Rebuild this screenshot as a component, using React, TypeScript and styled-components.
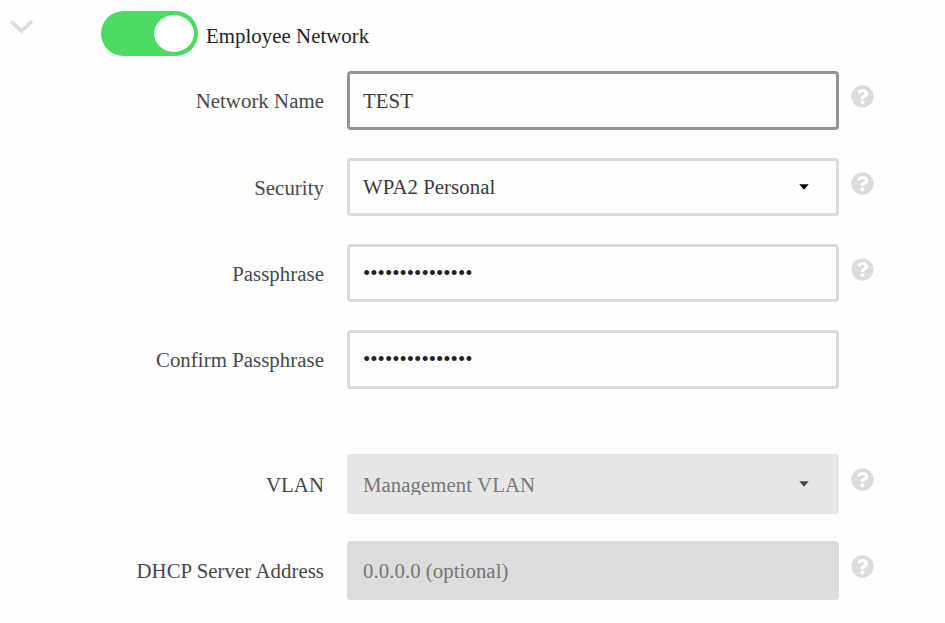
import React from "react";
import styled, { createGlobalStyle } from "styled-components";
import { FaQuestionCircle } from "react-icons/fa";

const GlobalStyle = createGlobalStyle`
  *, *::before, *::after { box-sizing: border-box; }
  body {
    margin: 0;
    background: #fefefe;
    font-family: "Liberation Serif", "Times New Roman", serif;
    font-size: 20.8px;
    letter-spacing: 0.06px;
  }
`;

const Page = styled.main`
  width: 945px;
  height: 623px;
  overflow: hidden;
`;

const Header = styled.header`
  display: flex;
  align-items: flex-start;
  height: 71px;
  padding: 11px 0 0 9px;
`;

const Chevron = styled.svg`
  width: 25px;
  height: 16px;
  margin: 8px 67px 0 0;
`;

const Toggle = styled.button`
  display: flex;
  justify-content: flex-end;
  width: 97px;
  height: 45px;
  padding: 4px;
  border: 0;
  border-radius: 23px;
  background: #4cd964;
`;

const Knob = styled.span`
  width: 40px;
  height: 37px;
  border-radius: 50%;
  background: #fff;
`;

const Title = styled.span`
  margin: 13px 0 0 8px;
  color: #222;
  line-height: 24px;
  white-space: nowrap;
`;

const Row = styled.div<{ $height: number; $gap: number }>`
  display: grid;
  grid-template-columns: 324px 492px 23px;
  column-gap: 23px;
  height: ${(p) => p.$height}px;
  margin-bottom: ${(p) => p.$gap}px;
`;

const Label = styled.label<{ $top: number }>`
  padding-top: ${(p) => p.$top}px;
  color: #484848;
  line-height: 24px;
  text-align: right;
  white-space: nowrap;
`;

type Tone = "focused" | "normal" | "disabledSelect" | "disabledInput";

const tones: Record<Tone, { border: string; fill: string; text: string }> = {
  focused: { border: "#939393", fill: "#fefefe", text: "#3c3c3c" },
  normal: { border: "#dadada", fill: "#fefefe", text: "#3a3a3a" },
  disabledSelect: { border: "#e6e6e6", fill: "#e6e6e6", text: "#777" },
  disabledInput: { border: "#dcdcdc", fill: "#dcdcdc", text: "#757575" },
};

const Field = styled.div<{ $tone: Tone; $top: number }>`
  display: flex;
  align-items: flex-start;
  justify-content: space-between;
  padding: ${(p) => p.$top}px 27px 0 13px;
  border: 3px solid ${(p) => tones[p.$tone].border};
  border-radius: 4px;
  background: ${(p) => tones[p.$tone].fill};
  color: ${(p) => tones[p.$tone].text};
`;

const Value = styled.span<{ $clip?: boolean }>`
  height: ${(p) => (p.$clip ? 22 : 24)}px;
  overflow: ${(p) => (p.$clip ? "hidden" : "visible")};
  line-height: 24px;
  white-space: nowrap;
`;

const Dots = styled(Value)`
  color: #222;
  letter-spacing: 0.02px;
`;

const Caret = styled.svg<{ $top: number }>`
  width: 10px;
  height: 6px;
  margin-top: ${(p) => p.$top}px;
`;

const Help = styled(FaQuestionCircle)<{ $top: number }>`
  width: 23px;
  height: 23px;
  margin: ${(p) => p.$top}px 0 0 -11px;
  color: #dcdcdc;
`;

interface FieldRow {
  label: string;
  value: string;
  tone: Tone;
  height: number;
  gap: number;
  labelTop: number;
  top: number;
  kind?: "select" | "password";
  helpTop?: number;
}

const rows: FieldRow[] = [
  { label: "Network Name", value: "TEST", tone: "focused", height: 59, gap: 28, labelTop: 18, top: 15, helpTop: 14 },
  { label: "Security", value: "WPA2 Personal", tone: "normal", height: 58, gap: 28, labelTop: 18, top: 14, kind: "select", helpTop: 14 },
  { label: "Passphrase", value: "•".repeat(15), tone: "normal", height: 58, gap: 28, labelTop: 18, top: 14, kind: "password", helpTop: 14 },
  { label: "Confirm Passphrase", value: "•".repeat(15), tone: "normal", height: 59, gap: 65, labelTop: 18, top: 14, kind: "password" },
  { label: "VLAN", value: "Management VLAN", tone: "disabledSelect", height: 60, gap: 27, labelTop: 19, top: 16, kind: "select", helpTop: 14 },
  { label: "DHCP Server Address", value: "0.0.0.0 (optional)", tone: "disabledInput", height: 59, gap: 0, labelTop: 18, top: 15, helpTop: 14 },
];

export default function App() {
  return (
    <>
      <GlobalStyle />
      <Page>
        <Header>
          <Chevron viewBox="0 0 25 16">
            <path d="M2 2.3 12.5 12 23 2.3" fill="none" stroke="#dcdcdc" strokeWidth="3.8" />
          </Chevron>
          <Toggle role="switch" aria-checked="true" aria-label="Employee Network">
            <Knob />
          </Toggle>
          <Title>Employee Network</Title>
        </Header>
        {rows.map((row) => (
          <Row key={row.label} $height={row.height} $gap={row.gap}>
            <Label $top={row.labelTop}>{row.label}</Label>
            <Field $tone={row.tone} $top={row.top}>
              {row.kind === "password" ? (
                <Dots>{row.value}</Dots>
              ) : (
                <Value $clip={row.tone === "disabledSelect"}>{row.value}</Value>
              )}
              {row.kind === "select" && (
                <Caret viewBox="0 0 10 6" $top={row.tone === "normal" ? 9 : 8}>
                  <path d="M0.3 0.3h9.4L5 5.8z" fill={row.tone === "normal" ? "#000" : "#444"} />
                </Caret>
              )}
            </Field>
            {row.helpTop !== undefined && <Help $top={row.helpTop} />}
          </Row>
        ))}
      </Page>
    </>
  );
}
